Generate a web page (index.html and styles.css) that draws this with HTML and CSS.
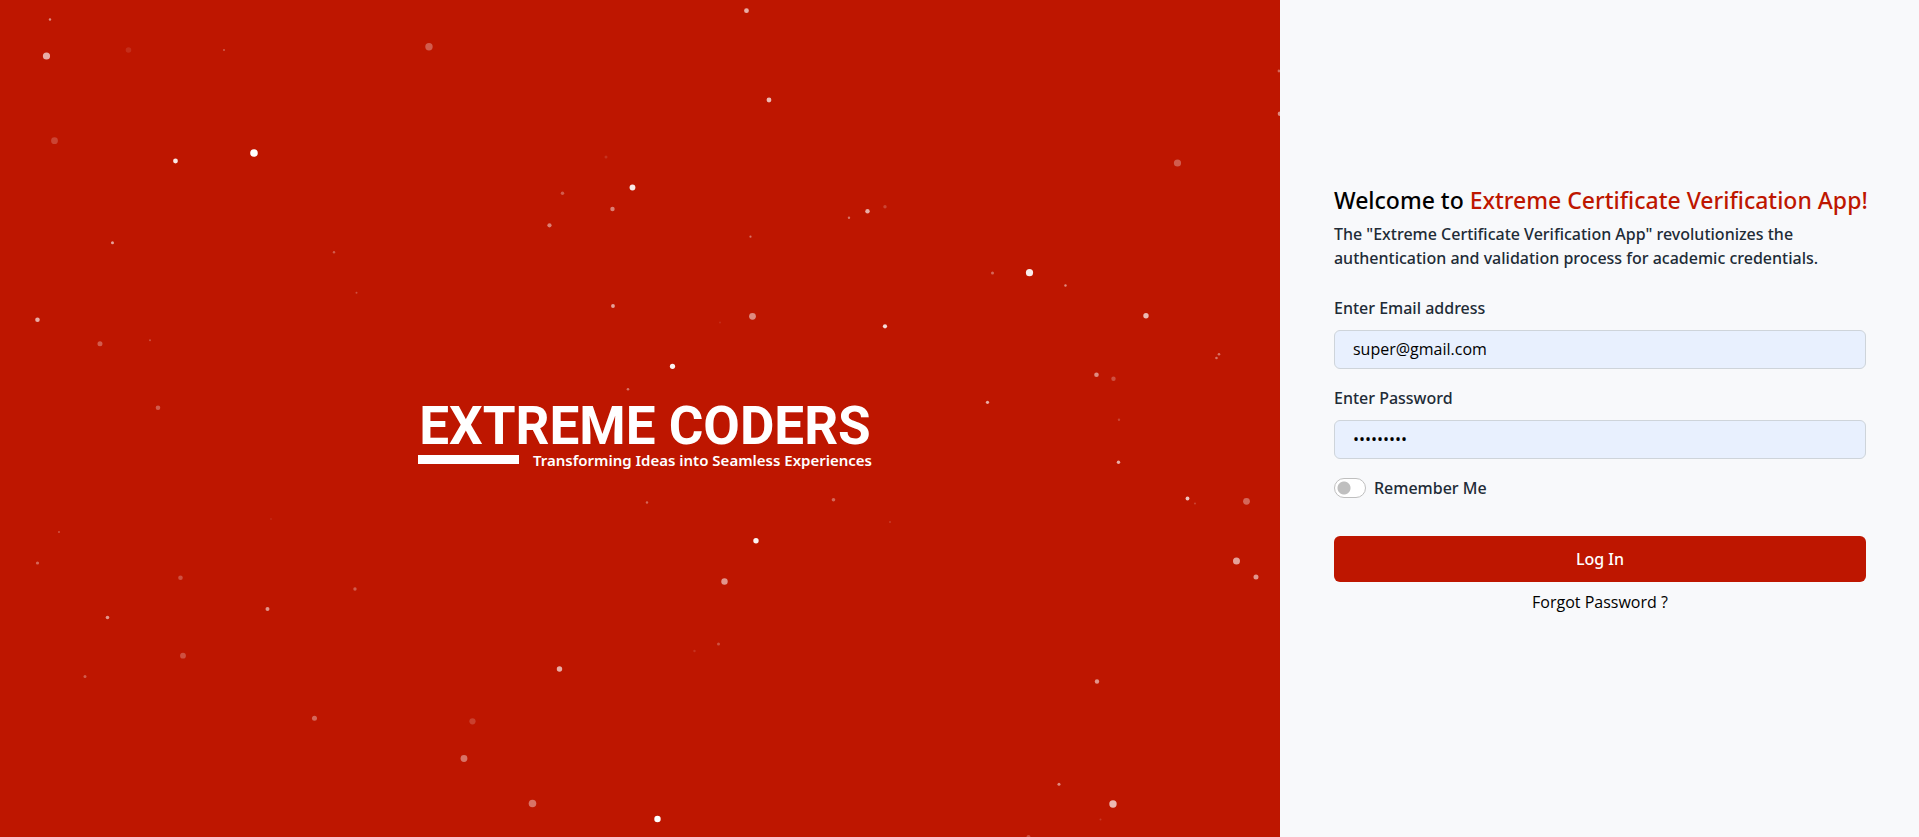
FILE: index.html
```html
<!DOCTYPE html>
<html lang="en">
<head>
<meta charset="utf-8">
<meta name="viewport" content="width=device-width, initial-scale=1">
<title>Log In - Extreme Certificate Verification App</title>
<link rel="stylesheet" href="styles.css">
</head>
<body>
<div class="page">
  <section class="hero">
    <svg class="particles" viewBox="0 0 1280 837" preserveAspectRatio="xMidYMid slice" fill="#fff" aria-hidden="true">
      <circle cx="50" cy="19.500" r="1.200" opacity=".5"/>
      <circle cx="46.500" cy="56" r="3.600" opacity=".65"/>
      <circle cx="128.500" cy="50" r="2.800" opacity=".1"/>
      <circle cx="224" cy="50" r="1" opacity=".3"/>
      <circle cx="429" cy="46.700" r="3.700" opacity=".3"/>
      <circle cx="54.500" cy="140.700" r="3.400" opacity=".2"/>
      <circle cx="175.500" cy="161" r="2.400" opacity=".9"/>
      <circle cx="254" cy="153" r="3.800"/>
      <circle cx="606" cy="157" r="1.500" opacity=".12"/>
      <circle cx="632.500" cy="187.500" r="2.900" opacity=".9"/>
      <circle cx="562.500" cy="193.300" r="1.700" opacity=".3"/>
      <circle cx="612.500" cy="209" r="2.200" opacity=".45"/>
      <circle cx="549.500" cy="225.300" r="2.100" opacity=".45"/>
      <circle cx="112.500" cy="242.700" r="1.500" opacity=".6"/>
      <circle cx="334" cy="252.300" r="1.200" opacity=".3"/>
      <circle cx="356.500" cy="292.700" r="1" opacity=".25"/>
      <circle cx="613" cy="306" r="1.900" opacity=".6"/>
      <circle cx="37.500" cy="319.700" r="2.300" opacity=".65"/>
      <circle cx="100" cy="343.700" r="2.500" opacity=".3"/>
      <circle cx="150" cy="340.300" r="1" opacity=".25"/>
      <circle cx="158" cy="407.700" r="2.300" opacity=".3"/>
      <circle cx="628" cy="389.300" r="1.300" opacity=".4"/>
      <circle cx="746.500" cy="10.700" r="2.400" opacity=".65"/>
      <circle cx="769" cy="100" r="2.400" opacity=".7"/>
      <circle cx="1279" cy="71" r="1.400" opacity=".35"/>
      <circle cx="1280" cy="113.700" r="2.300" opacity=".5"/>
      <circle cx="1177.500" cy="163" r="3.600" opacity=".3"/>
      <circle cx="867.500" cy="211.300" r="2.200" opacity=".65"/>
      <circle cx="885" cy="206.700" r="1.700" opacity=".2"/>
      <circle cx="849" cy="217.700" r="1.200" opacity=".4"/>
      <circle cx="750.500" cy="236.700" r="1.100" opacity=".4"/>
      <circle cx="992.500" cy="273" r="1.500" opacity=".35"/>
      <circle cx="1029.500" cy="272.700" r="3.600" opacity=".92"/>
      <circle cx="1065.500" cy="285.500" r="1.200" opacity=".5"/>
      <circle cx="752.500" cy="316.300" r="3.400" opacity=".5"/>
      <circle cx="720" cy="322.500" r="1" opacity=".1"/>
      <circle cx="885" cy="326.300" r="2.100" opacity=".85"/>
      <circle cx="1146" cy="315.700" r="2.700" opacity=".7"/>
      <circle cx="672.500" cy="366.300" r="2.600" opacity=".95"/>
      <circle cx="1219" cy="354.300" r="1.300" opacity=".4"/>
      <circle cx="1216.500" cy="358" r="1.300" opacity=".4"/>
      <circle cx="1096.500" cy="374.700" r="2.300" opacity=".5"/>
      <circle cx="1113.500" cy="378.700" r="2.200" opacity=".25"/>
      <circle cx="987.500" cy="402.300" r="1.600" opacity=".65"/>
      <circle cx="1119" cy="419.700" r="1.200" opacity=".2"/>
      <circle cx="271" cy="519" r="1" opacity=".08"/>
      <circle cx="59" cy="532" r="1.100" opacity=".25"/>
      <circle cx="37.500" cy="563" r="1.600" opacity=".35"/>
      <circle cx="180.500" cy="577.700" r="2.300" opacity=".25"/>
      <circle cx="355" cy="589" r="1.700" opacity=".3"/>
      <circle cx="267.500" cy="609" r="2" opacity=".55"/>
      <circle cx="107.500" cy="617.500" r="1.800" opacity=".55"/>
      <circle cx="183" cy="655.700" r="2.900" opacity=".25"/>
      <circle cx="85" cy="676.500" r="1.500" opacity=".3"/>
      <circle cx="314.500" cy="718.300" r="2.500" opacity=".35"/>
      <circle cx="472.500" cy="721.300" r="3.100" opacity=".18"/>
      <circle cx="464" cy="758.500" r="3.400" opacity=".4"/>
      <circle cx="532.500" cy="803.500" r="3.800" opacity=".4"/>
      <circle cx="559.500" cy="669" r="2.700" opacity=".65"/>
      <circle cx="647" cy="502.500" r="1.200" opacity=".35"/>
      <circle cx="833.500" cy="499.700" r="1.800" opacity=".35"/>
      <circle cx="890" cy="522" r="1.100" opacity=".15"/>
      <circle cx="756" cy="540.700" r="2.700" opacity=".95"/>
      <circle cx="724.500" cy="581.500" r="3.200" opacity=".55"/>
      <circle cx="718.500" cy="644" r="1.500" opacity=".25"/>
      <circle cx="694.500" cy="651" r="1.200" opacity=".12"/>
      <circle cx="1118.500" cy="462.300" r="1.700" opacity=".65"/>
      <circle cx="1187.500" cy="498.500" r="1.900" opacity=".75"/>
      <circle cx="1195" cy="503.500" r="1" opacity=".2"/>
      <circle cx="1246.500" cy="501.300" r="3.400" opacity=".35"/>
      <circle cx="1236.500" cy="561" r="3.500" opacity=".6"/>
      <circle cx="1256" cy="577" r="2.500" opacity=".55"/>
      <circle cx="1097" cy="681.500" r="2.200" opacity=".55"/>
      <circle cx="1059" cy="784.300" r="1.500" opacity=".5"/>
      <circle cx="1113" cy="804" r="3.700" opacity=".7"/>
      <circle cx="657.500" cy="819" r="3.200"/>
      <circle cx="1100.500" cy="819.500" r="1" opacity=".15"/>
      <circle cx="1028.500" cy="837" r="2" opacity=".25"/>
    </svg>
    <div class="brand">
      <div class="brand-name">EXTREME CODERS</div>
      <div class="brand-line"><span class="brand-bar"></span><span class="brand-tagline">Transforming Ideas into Seamless Experiences</span></div>
    </div>
  </section>
  <main class="panel">
    <form class="login">
      <h1 class="title">Welcome to <span class="accent">Extreme Certificate Verification App!</span></h1>
      <p class="intro">The "Extreme Certificate Verification App" revolutionizes the authentication and validation process for academic credentials.</p>
      <div class="field">
        <label class="label" for="email">Enter Email address</label>
        <input class="input" id="email" type="email" value="super@gmail.com">
      </div>
      <div class="field">
        <label class="label" for="password">Enter Password</label>
        <input class="input" id="password" type="password" value="password1">
      </div>
      <div class="remember">
        <input class="switch" id="remember" type="checkbox">
        <label for="remember">Remember Me</label>
      </div>
      <button class="submit" type="submit">Log In</button>
      <a class="forgot" href="#">Forgot Password ?</a>
    </form>
  </main>
</div>
</body>
</html>
```
FILE: styles.css
```css
* { box-sizing: border-box; }

body {
  margin: 0;
  font-family: "Open Sans", "Noto Sans", sans-serif;
  font-size: 16px;
  line-height: 24px;
  color: #212b36;
  background: #f8f9fb;
}

.page {
  display: grid;
  grid-template-columns: 66.7% 33.3%;
  min-height: 100vh;
}

.hero {
  position: relative;
  display: flex;
  align-items: center;
  justify-content: center;
  padding: 34px 0 0 10px;
  overflow: hidden;
  background: #be1600;
  color: #fff;
}

.particles {
  position: absolute;
  inset: 0;
  width: 100%;
  height: 100%;
}

.brand-name {
  font-family: Roboto, sans-serif;
  font-size: 53px;
  font-weight: 700;
  line-height: 48px;
  text-align: center;
  white-space: nowrap;
}

.brand-line {
  display: flex;
  align-items: center;
  gap: 14px;
}

.brand-bar {
  width: 101px;
  height: 9px;
  background: #fff;
}

.brand-tagline {
  font-family: "Noto Sans", sans-serif;
  font-size: 15px;
  font-weight: 600;
  line-height: 20px;
  white-space: nowrap;
}

.panel {
  display: flex;
  align-items: center;
  padding: 0 53px 40px 54px;
}

.login { width: 100%; }

.title,
.intro,
.label,
.remember,
.submit {
  font-family: "Noto Sans", "Open Sans", sans-serif;
  font-weight: 500;
}

.title {
  margin: 0 0 6px;
  font-size: 23px;
  line-height: 32px;
  color: #000;
}

@media (min-width: 1900px) {
  .title { white-space: nowrap; }
}

.accent { color: #be1600; }

.intro { margin: 0 0 26px; }

.field { margin-bottom: 17px; }

.label {
  display: block;
  margin-bottom: 10px;
}

.input {
  display: block;
  width: 100%;
  height: 39px;
  padding: 0 18px;
  border: 1px solid #ced4da;
  border-radius: 6px;
  background: #e8f0fe;
  font: inherit;
  color: #000;
}

.remember {
  display: flex;
  align-items: center;
  gap: 8px;
  margin-bottom: 36px;
}

.switch {
  appearance: none;
  width: 32px;
  height: 20px;
  margin: 0;
  border: 1px solid #bfbfbf;
  border-radius: 10px;
  background: radial-gradient(circle at 9px 9px, #bfbfbf 6px, #fff 7px);
}

.submit {
  display: block;
  width: 100%;
  height: 46px;
  border: 0;
  border-radius: 6px;
  background: #be1600;
  color: #fff;
  font-size: 16px;
}

.forgot {
  display: block;
  margin-top: 8px;
  text-align: center;
  text-decoration: none;
  color: #000;
}
```
